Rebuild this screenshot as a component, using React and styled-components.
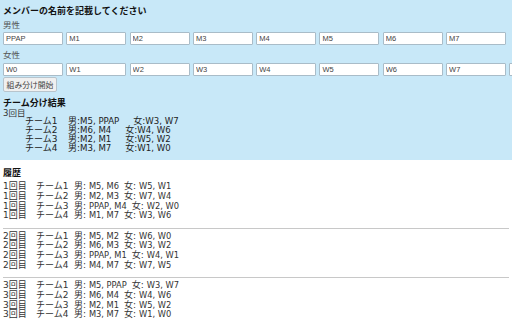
import React from "react";
import styled, { createGlobalStyle } from "styled-components";

const Global = createGlobalStyle`
  html, body { margin: 0; padding: 0; background: #fff; }
  body { font-family: "DejaVu Sans", "Noto Sans CJK JP", sans-serif; color: #333; }
  #root { width: 512px; height: 320px; overflow: hidden; }
`;

const jp = `"DejaVu Sans", "Noto Sans CJK JP", sans-serif`;

const Panel = styled.section`
  background: #c8e8f8;
  padding: 4px 3px 0;
  height: 160px;
  box-sizing: border-box;
  overflow: hidden;
`;

const Heading = styled.div`
  font-family: ${jp};
  font-weight: bold;
  font-size: 9px;
  line-height: ${(p) => p.$lh || "14px"};
  color: #111;
  margin: ${(p) => p.$m || "0"};
`;

const Label = styled.div`
  font-family: ${jp};
  font-size: 8.5px;
  line-height: ${(p) => p.$lh || "14px"};
  color: #555;
  margin: ${(p) => p.$m || "0"};
`;

const InputRow = styled.div`
  display: flex;
  gap: 3.3px;
  width: 540px;
`;

const NameInput = styled.input`
  flex: 0 0 auto;
  width: 60px;
  height: 13px;
  box-sizing: border-box;
  border: 1px solid #a9bcc8;
  border-radius: 1px;
  background: #fff;
  padding: 0 2px;
  font-family: "Liberation Sans", Arial, sans-serif;
  font-size: 7.5px;
  color: #444;
  outline: none;
`;

const Button = styled.button`
  display: block;
  margin-top: 1px;
  height: 15px;
  width: 54px;
  padding: 0;
  box-sizing: border-box;
  border: 1px solid #b8c4cc;
  border-radius: 2px;
  background: #f0f0f0;
  font-family: ${jp};
  font-size: 7.8px;
  color: #444;
`;

const Round = styled.div`
  font-family: ${jp};
  font-size: 8.5px;
  line-height: 8px;
  color: #333;
`;

const Line = styled.div`
  display: flex;
  align-items: baseline;
  font-family: ${jp};
  font-size: 9px;
  line-height: ${(p) => p.$lh};
  color: ${(p) => p.$color || "#333"};
  white-space: pre;
  padding-left: ${(p) => p.$indent || "0"};
`;

const Cell = styled.span`
  display: inline-block;
  width: ${(p) => p.$w || "auto"};
  margin-left: ${(p) => p.$ml || "0"};
  flex: 0 0 auto;
`;

const Names = styled.span`
  font-size: ${(p) => p.$size || "8.3px"};
`;

const History = styled.section`
  padding: 7px 3px 0;
`;

const Group = styled.div`
  padding: 3.2px 0 6.5px;
  border-bottom: ${(p) => (p.$last ? "none" : "1px solid #c8c8c8")};
`;

const men = ["PPAP", "M1", "M2", "M3", "M4", "M5", "M6", "M7"];
const women = ["W0", "W1", "W2", "W3", "W4", "W5", "W6", "W7", ""];

const current = [
  ["M5, PPAP", "W3, W7"],
  ["M6, M4", "W4, W6"],
  ["M2, M1", "W5, W2"],
  ["M3, M7", "W1, W0"],
];

const history = [
  [
    ["M5, M6", "W5, W1"],
    ["M2, M3", "W7, W4"],
    ["PPAP, M4", "W2, W0"],
    ["M1, M7", "W3, W6"],
  ],
  [
    ["M5, M2", "W6, W0"],
    ["M6, M3", "W3, W2"],
    ["PPAP, M1", "W4, W1"],
    ["M4, M7", "W7, W5"],
  ],
  [
    ["M5, PPAP", "W3, W7"],
    ["M6, M4", "W4, W6"],
    ["M2, M1", "W5, W2"],
    ["M3, M7", "W1, W0"],
  ],
];

export default function App() {
  return (
    <>
      <Global />
      <Panel>
        <Heading>メンバーの名前を記載してください</Heading>
        <Label>男性</Label>
        <InputRow>
          {men.map((v, i) => (
            <NameInput key={i} defaultValue={v} />
          ))}
        </InputRow>
        <Label $m="3px 0 0" $lh="15px">女性</Label>
        <InputRow>
          {women.map((v, i) => (
            <NameInput key={i} defaultValue={v} />
          ))}
        </InputRow>
        <Button>組み分け開始</Button>
        <Heading $m="5px 0 0" $lh="12px">チーム分け結果</Heading>
        <Round>3回目</Round>
        {current.map(([m, w], i) => (
          <Line key={i} $lh="9px" $indent="22px" $color="#222">
            <Cell $w="43px">{`チーム${i + 1}`}</Cell>
            <Cell>
              男:<Names $size="8.6px">{m}</Names>
            </Cell>
            <Cell $ml="14px">
              女:<Names $size="8.6px">{w}</Names>
            </Cell>
          </Line>
        ))}
      </Panel>
      <History>
        <Heading $lh="12px">履歴</Heading>
        {history.map((g, gi) => (
          <Group key={gi} $last={gi === history.length - 1}>
            {g.map(([m, w], i) => (
              <Line key={i} $lh="9.7px">
                <Cell $w="33px">{`${gi + 1}回目`}</Cell>
                <Cell $w="38px">{`チーム${i + 1}`}</Cell>
                <Cell>
                  男: <Names>{m}</Names>
                </Cell>
                <Cell $ml="5px">
                  女: <Names>{w}</Names>
                </Cell>
              </Line>
            ))}
          </Group>
        ))}
      </History>
    </>
  );
}
